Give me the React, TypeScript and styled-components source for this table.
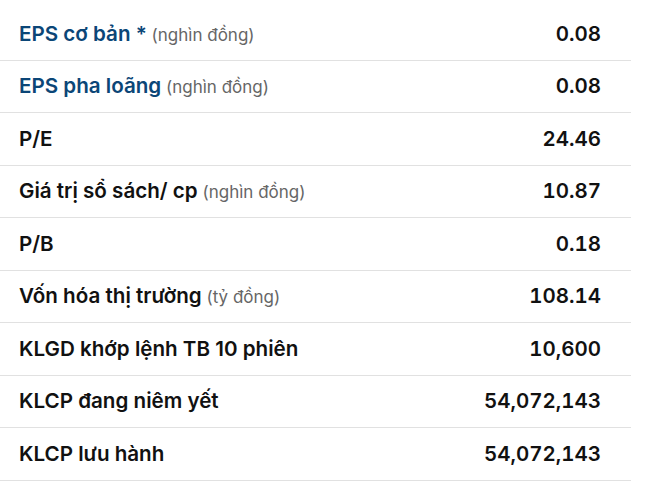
import styled, { createGlobalStyle } from "styled-components";

const GlobalStyle = createGlobalStyle`
  body {
    margin: 0;
    padding-top: 8px;
    background: #fff;
    font-family: Inter, "Noto Sans", sans-serif;
  }
`;

const Table = styled.div`
  width: 631px;
  display: flex;
  flex-direction: column;
`;

const Row = styled.div`
  height: 52px;
  box-sizing: border-box;
  display: flex;
  align-items: center;
  justify-content: space-between;
  padding: 0 30px 2px 19px;
  border-bottom: 1px solid #e1e1e1;
  &:nth-child(odd) {
    height: 53px;
  }
`;

const Label = styled.div<{ $accent?: boolean }>`
  font-size: 20.6px;
  font-weight: 600;
  color: ${(p) => (p.$accent ? "#0b4677" : "#111")};
`;

const Unit = styled.span`
  font-size: 17px;
  font-weight: 400;
  color: #666;
`;

const Value = styled.div`
  font-size: 20.5px;
  font-weight: 600;
  color: #111;
  font-variant-numeric: tabular-nums;
`;

const rows = [
  { label: "EPS cơ bản *", unit: "(nghìn đồng)", value: "0.08", accent: true },
  { label: "EPS pha loãng", unit: "(nghìn đồng)", value: "0.08", accent: true },
  { label: "P/E", value: "24.46" },
  { label: "Giá trị sổ sách/ cp", unit: "(nghìn đồng)", value: "10.87" },
  { label: "P/B", value: "0.18" },
  { label: "Vốn hóa thị trường", unit: "(tỷ đồng)", value: "108.14" },
  { label: "KLGD khớp lệnh TB 10 phiên", value: "10,600" },
  { label: "KLCP đang niêm yết", value: "54,072,143" },
  { label: "KLCP lưu hành", value: "54,072,143" },
];

export default function App() {
  return (
    <>
      <GlobalStyle />
      <Table>
        {rows.map((r) => (
          <Row key={r.label}>
            <Label $accent={r.accent}>
              {r.label}
              {r.unit && <Unit> {r.unit}</Unit>}
            </Label>
            <Value>{r.value}</Value>
          </Row>
        ))}
      </Table>
    </>
  );
}
